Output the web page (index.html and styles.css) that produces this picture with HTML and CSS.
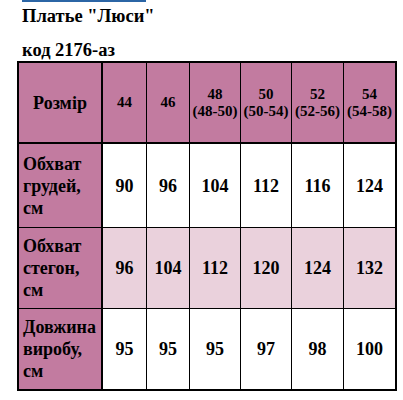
FILE: index.html
```html
<!DOCTYPE html>
<html lang="uk">
<head>
<meta charset="utf-8">
<title>Платье "Люси"</title>
<link rel="stylesheet" href="styles.css">
</head>
<body>
<div class="page">
  <div class="topline"></div>
  <h1 class="title">Платье "Люси"</h1>
  <h2 class="code">код 2176-аз</h2>
  <table class="sizes">
    <colgroup>
      <col class="c0"><col class="c1"><col class="c2"><col class="c3"><col class="c4"><col class="c5"><col class="c6">
    </colgroup>
    <tr class="head">
      <th class="label center">Розмір</th>
      <th class="sz">44</th>
      <th class="sz">46</th>
      <th class="sz">48<br>(48-50)</th>
      <th class="sz">50<br>(50-54)</th>
      <th class="sz">52<br>(52-56)</th>
      <th class="sz last">54<br>(54-58)</th>
    </tr>
    <tr class="r1">
      <th class="label">Обхват<br>грудей,<br>см</th>
      <td>90</td><td>96</td><td>104</td><td>112</td><td>116</td><td class="last">124</td>
    </tr>
    <tr class="r2 pink">
      <th class="label">Обхват<br>стегон,<br>см</th>
      <td>96</td><td>104</td><td>112</td><td>120</td><td>124</td><td class="last">132</td>
    </tr>
    <tr class="r3 end">
      <th class="label">Довжина<br>виробу,<br>см</th>
      <td>95</td><td>95</td><td>95</td><td>97</td><td>98</td><td class="last">100</td>
    </tr>
  </table>
</div>
</body>
</html>
```

FILE: styles.css
```css
html, body {
  margin: 0;
  padding: 0;
  background: #ffffff;
}
.page {
  padding-left: 17px;
  font-family: "Liberation Serif", "Times New Roman", serif;
  color: #000;
}
.topline {
  margin-left: 5px;
  width: 124px;
  height: 2px;
  background: #2b65a5;
}
.title, .code {
  margin: 0;
  padding-left: 5px;
  font-size: 18.5px;
  line-height: 21px;
  font-weight: bold;
}
.title {
  margin-top: 4px;
  margin-bottom: 13px;
}
.sizes {
  border-collapse: separate;
  border-spacing: 0;
  table-layout: fixed;
  width: 380px;
  border-left: 2px solid #000;
  border-top: 2px solid #000;
}
.c0 { width: 84px; }
.c1 { width: 44px; }
.c2 { width: 43px; }
.c3 { width: 51px; }
.c4 { width: 51px; }
.c5 { width: 52px; }
.c6 { width: 53px; }
.sizes th, .sizes td {
  box-sizing: border-box;
  padding: 0;
  border-right: 1px solid #000;
  border-bottom: 1px solid #000;
  font-weight: bold;
  text-align: center;
  vertical-align: middle;
}
.sizes td {
  font-size: 18px;
  line-height: 22px;
}
.sizes .last {
  border-right-width: 2px;
}
.head th {
  background: #c27ba0;
  height: 81px;
  border-bottom-width: 2px;
}
.sizes .label {
  background: #c27ba0;
  border-right-width: 2px;
  font-size: 18px;
  line-height: 22px;
  text-align: left;
  padding: 0 2px 0 4px;
}
.sizes .label.center {
  text-align: center;
  padding: 0;
}
.sizes .sz {
  font-size: 15px;
  line-height: 17px;
}
.r1 td, .r1 th { height: 84px; }
.r2 td, .r2 th { height: 81px; }
.r3 td, .r3 th { height: 82px; }
.pink td { background: #ead1dc; }
.end td, .end th { border-bottom-width: 2px; }
```
